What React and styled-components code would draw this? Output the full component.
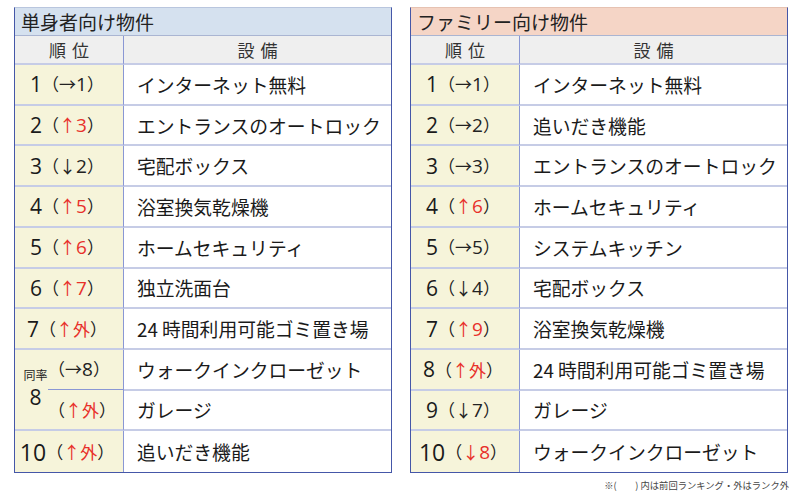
import React from 'react';
import styled, { createGlobalStyle } from 'styled-components';

const GlobalStyle = createGlobalStyle`
  html, body {
    margin: 0;
    padding: 0;
    background: #fff;
  }
  body {
    font-family: "Noto Sans", "Noto Sans CJK JP", sans-serif;
    color: #222;
  }
`;

const Page = styled.div`
  width: 800px;
  height: 493px;
  box-sizing: border-box;
  padding: 7px 11px 0 14px;
  display: flex;
  flex-direction: column;
`;

const Tables = styled.div`
  display: flex;
  gap: 18px;
`;

const Table = styled.div`
  width: 378px;
  height: 466px;
  box-sizing: border-box;
  border: 1px solid #4557a8;
  border-top-color: ${p => p.$edge};
  display: grid;
  grid-template-columns: 109px 1fr;
  grid-template-rows: 28px 29px repeat(10, 1fr);
`;

const Title = styled.div`
  grid-column: 1 / -1;
  background: ${p => p.$bg};
  border-bottom: 1px solid #aab5d2;
  font-family: "Noto Sans CJK JP", sans-serif;
  font-size: 19px;
  line-height: 27px;
  padding-left: 6px;
  color: #222;
`;

const Head = styled.div`
  background: #efefef;
  border-bottom: 2px solid #c6cce6;
  border-right: ${p => (p.$first ? '1px solid #8a97d4' : 'none')};
  font-family: "Noto Sans CJK JP", sans-serif;
  font-size: 17px;
  color: #333;
  display: flex;
  align-items: center;
  justify-content: center;
  word-spacing: 2px;
`;

const RankCell = styled.div`
  background: #f6f4da;
  border-right: 1px solid #8a97d4;
  border-bottom: ${p => (p.$last ? 'none' : '2px solid #c6cce6')};
  grid-row: ${p => (p.$span ? 'span 2' : 'auto')};
  display: flex;
  align-items: center;
  justify-content: center;
  padding-right: ${p => (p.$span ? '0' : '4px')};
  white-space: nowrap;
`;

const Num = styled.span`
  font-family: "Open Sans", "Noto Sans", sans-serif;
  font-size: ${p => (p.$big ? '23px' : '21px')};
  color: #1a1a1a;
`;

const Prev = styled.span`
  font-family: "Noto Sans CJK JP", sans-serif;
  font-size: 17px;
  color: #222;
`;

const Move = styled.span`
  color: ${p => (p.$red ? '#e8302a' : '#222')};
`;

const Digit = styled.span`
  font-family: "Open Sans", "Noto Sans", sans-serif;
  font-size: 19px;
`;

const Item = styled.div`
  border-bottom: ${p => (p.$last ? 'none' : '2px solid #c6cce6')};
  font-family: "Noto Sans CJK JP", sans-serif;
  font-size: 18.8px;
  color: #1a1a1a;
  display: flex;
  align-items: center;
  padding-left: 13px;
  white-space: nowrap;
`;

const Tie = styled.div`
  display: flex;
  width: 100%;
  height: 100%;
`;

const TieLabel = styled.div`
  width: 33px;
  display: flex;
  flex-direction: column;
  align-items: center;
  justify-content: center;
  padding-left: 4px;
`;

const TieSmall = styled.span`
  font-family: "Noto Sans CJK JP", sans-serif;
  font-size: 12px;
  line-height: 14px;
  margin-bottom: 1px;
`;

const TieMoves = styled.div`
  flex: 1;
  display: flex;
  flex-direction: column;
`;

const TieMove = styled.div`
  flex: 1;
  display: flex;
  align-items: center;
  margin-left: -4px;
  padding-left: 0;
  border-top: ${p => (p.$second ? '1px solid #8a97d4' : 'none')};
`;

const Note = styled.div`
  align-self: flex-end;
  margin-top: 5px;
  font-family: "Noto Sans CJK JP", sans-serif;
  font-size: 9.3px;
  color: #444;
`;

const Paren = ({ move, red }) => {
  const arrow = move.slice(0, 1);
  const rest = move.slice(1);
  return (
    <Prev>
      （
      <Move $red={red}>
        {arrow}
        {/[0-9]/.test(rest) ? <Digit>{rest}</Digit> : rest}
      </Move>
      ）
    </Prev>
  );
};

const single = [
  { rank: '1', move: '→1', name: 'インターネット無料' },
  { rank: '2', move: '↑3', red: true, name: 'エントランスのオートロック' },
  { rank: '3', move: '↓2', name: '宅配ボックス' },
  { rank: '4', move: '↑5', red: true, name: '浴室換気乾燥機' },
  { rank: '5', move: '↑6', red: true, name: 'ホームセキュリティ' },
  { rank: '6', move: '↑7', red: true, name: '独立洗面台' },
  { rank: '7', move: '↑外', red: true, name: '24 時間利用可能ゴミ置き場' },
  {
    tie: '8',
    items: [
      { move: '→8', name: 'ウォークインクローゼット' },
      { move: '↑外', red: true, name: 'ガレージ' },
    ],
  },
  { rank: '10', move: '↑外', red: true, name: '追いだき機能' },
];

const family = [
  { rank: '1', move: '→1', name: 'インターネット無料' },
  { rank: '2', move: '→2', name: '追いだき機能' },
  { rank: '3', move: '→3', name: 'エントランスのオートロック' },
  { rank: '4', move: '↑6', red: true, name: 'ホームセキュリティ' },
  { rank: '5', move: '→5', name: 'システムキッチン' },
  { rank: '6', move: '↓4', name: '宅配ボックス' },
  { rank: '7', move: '↑9', red: true, name: '浴室換気乾燥機' },
  { rank: '8', move: '↑外', red: true, name: '24 時間利用可能ゴミ置き場' },
  { rank: '9', move: '↓7', name: 'ガレージ' },
  { rank: '10', move: '↓8', red: true, name: 'ウォークインクローゼット' },
];

const Ranking = ({ title, bg, edge, rows }) => (
  <Table $edge={edge}>
    <Title $bg={bg}>{title}</Title>
    <Head $first>順 位</Head>
    <Head>設 備</Head>
    {rows.map((r, i) => {
      const last = i === rows.length - 1;
      if (r.tie) {
        return (
          <React.Fragment key={i}>
            <RankCell $span>
              <Tie>
                <TieLabel>
                  <TieSmall>同率</TieSmall>
                  <Num>{r.tie}</Num>
                </TieLabel>
                <TieMoves>
                  {r.items.map((t, j) => (
                    <TieMove key={j} $second={j > 0}>
                      <Paren move={t.move} red={t.red} />
                    </TieMove>
                  ))}
                </TieMoves>
              </Tie>
            </RankCell>
            {r.items.map((t, j) => (
              <Item key={j}>{t.name}</Item>
            ))}
          </React.Fragment>
        );
      }
      return (
        <React.Fragment key={i}>
          <RankCell $last={last}>
            <Num $big={r.rank.length > 1}>{r.rank}</Num>
            <Paren move={r.move} red={r.red} />
          </RankCell>
          <Item $last={last}>{r.name}</Item>
        </React.Fragment>
      );
    })}
  </Table>
);

export default function App() {
  return (
    <>
      <GlobalStyle />
      <Page>
        <Tables>
          <Ranking title="単身者向け物件" bg="#d5e1ef" edge="#b9c6de" rows={single} />
          <Ranking title="ファミリー向け物件" bg="#f5d5c6" edge="#e6c2b2" rows={family} />
        </Tables>
        <Note>※(　　) 内は前回ランキング・外はランク外</Note>
      </Page>
    </>
  );
}
